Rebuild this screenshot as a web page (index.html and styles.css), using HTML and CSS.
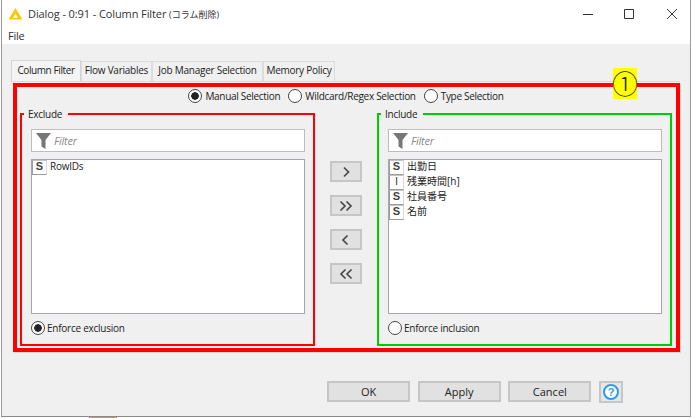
FILE: index.html
```html
<!DOCTYPE html>
<html lang="ja">
<head>
<meta charset="utf-8">
<title>Dialog - 0:91 - Column Filter</title>
<link rel="stylesheet" href="styles.css">
</head>
<body>
<div class="window">
  <header class="titlebar">
    <svg class="app-icon" width="15" height="13" viewBox="0 0 16 14"><path d="M8 1 15.5 13.5H.5Z" fill="#fbc800"/><path d="M8 7 10.6 11.5H5.4Z" fill="#fff"/></svg>
    <span class="title">Dialog - 0:91 - Column Filter <span class="cjk">(コラム削除)</span></span>
    <div class="controls">
      <svg width="12" height="12" viewBox="0 0 12 12"><path d="M1 6.5H11" stroke="#333" fill="none"/></svg>
      <svg width="12" height="12" viewBox="0 0 12 12"><path d="M1.5 1.5H10.5V10.5H1.5Z" stroke="#333" fill="none"/></svg>
      <svg class="close" width="12" height="12" viewBox="0 0 12 12"><path d="M1 1 11 11M11 1 1 11" stroke="#333" fill="none"/></svg>
    </div>
  </header>
  <div class="menubar">File</div>
  <main class="content">
    <nav class="tabs">
      <span class="tab active">Column Filter</span>
      <span class="tab t2">Flow Variables</span>
      <span class="tab t3">Job Manager Selection</span>
      <span class="tab t4">Memory Policy</span>
    </nav>
    <section class="pane">
      <div class="frame">
        <div class="mode">
          <label class="radio on">Manual Selection</label>
          <label class="radio">Wildcard/Regex Selection</label>
          <label class="radio">Type Selection</label>
        </div>
        <div class="columns">
          <fieldset class="group exclude">
            <legend>Exclude</legend>
            <div class="filter">
              <svg width="15" height="16" viewBox="0 0 15 16"><path d="M0 0H15L9.5 7V16L5.5 13.5V7Z" fill="#777"/></svg>
              <span>Filter</span>
            </div>
            <ul class="list">
              <li><b class="type">S</b><span class="latin">RowIDs</span></li>
            </ul>
            <label class="radio on enforce">Enforce exclusion</label>
          </fieldset>
          <div class="movers">
            <button class="mover"><svg width="12" height="12" viewBox="0 0 12 12"><path d="M4 1.5 8.5 6 4 10.5" /></svg></button>
            <button class="mover"><svg width="14" height="12" viewBox="0 0 14 12"><path d="M1.5 1.5 6 6 1.5 10.5M7.5 1.5 12 6 7.5 10.5" /></svg></button>
            <button class="mover"><svg width="12" height="12" viewBox="0 0 12 12"><path d="M7.5 1.5 3 6 7.5 10.5" /></svg></button>
            <button class="mover"><svg width="14" height="12" viewBox="0 0 14 12"><path d="M6.5 1.5 2 6 6.5 10.5M12.5 1.5 8 6 12.5 10.5" /></svg></button>
          </div>
          <fieldset class="group include">
            <legend>Include</legend>
            <div class="filter">
              <svg width="15" height="16" viewBox="0 0 15 16"><path d="M0 0H15L9.5 7V16L5.5 13.5V7Z" fill="#777"/></svg>
              <span>Filter</span>
            </div>
            <ul class="list">
              <li><b class="type">S</b>出勤日</li>
              <li><b class="type thin">I</b>残業時間[h]</li>
              <li><b class="type">S</b>社員番号</li>
              <li><b class="type">S</b>名前</li>
            </ul>
            <label class="radio enforce">Enforce inclusion</label>
          </fieldset>
        </div>
        <div class="badge">①</div>
      </div>
    </section>
    <footer class="actions">
      <button class="action">OK</button>
      <button class="action">Apply</button>
      <button class="action">Cancel</button>
      <button class="help"><svg width="18" height="18" viewBox="0 0 18 18"><circle cx="9" cy="9" r="7" fill="#fff" stroke="#2f9be8" stroke-width="2"/><text x="9" y="13" text-anchor="middle" class="help-q">?</text></svg></button>
    </footer>
  </main>
</div>
<div class="strip"></div>
</body>
</html>
```
FILE: styles.css
```css
* { box-sizing: border-box; }
html, body { margin: 0; padding: 0; }
body {
  width: 695px;
  height: 418px;
  overflow: hidden;
  background: #fff;
  font-family: "Open Sans", "Noto Sans CJK JP", sans-serif;
  font-size: 10px;
  letter-spacing: -0.25px;
  color: #222;
}
.window {
  width: 690px;
  height: 417px;
  margin-left: 1px;
  border-left: 1px solid #9a9a9a;
  border-right: 1px solid #9a9a9a;
  border-bottom: 1px solid #8a8a8a;
  display: flex;
  flex-direction: column;
  background: #fff;
}
.strip {
  width: 28px;
  height: 1px;
  margin-left: 89px;
  background: #c8a51e;
}
.titlebar {
  height: 27px;
  display: flex;
  align-items: center;
  padding-left: 6px;
  flex: none;
}
.app-icon { flex: none; }
.title {
  margin-left: 5px;
  font-size: 11px;
  letter-spacing: -0.1px;
  color: #333;
}
.cjk {
  font-size: 9px;
  letter-spacing: 0;
}
.controls {
  margin-left: auto;
  display: flex;
  gap: 29px;
  padding-right: 12px;
}
.close { margin-left: 2px; }
.menubar {
  height: 17px;
  line-height: 18px;
  padding-left: 6px;
  font-size: 11px;
  color: #333;
  flex: none;
}
.content {
  flex: 1;
  background: #f0f0f0;
  padding: 15px 10px 0 9px;
  display: flex;
  flex-direction: column;
}
.tabs {
  display: flex;
  height: 22px;
  align-items: flex-end;
  flex: none;
}
.tab {
  height: 20px;
  line-height: 17px;
  width: 71px;
  text-align: center;
  border: 1px solid #dcdcdc;
  border-bottom: none;
  color: #222;
  white-space: nowrap;
}
.tab.active {
  height: 22px;
  width: 70px;
  line-height: 18px;
  margin-bottom: -1px;
  background: #f4f4f4;
  border-color: #d4d4d4;
  letter-spacing: -0.4px;
}
.t3 { width: 111px; }
.t4 { width: 72px; }
.pane {
  margin-left: 2px;
  width: 667px;
  height: 272px;
  padding-top: 1px;
  border-top: 1px solid #d9d9d9;
  flex: none;
}
.frame {
  position: relative;
  height: 269px;
  border: 4px solid #f00;
  padding: 1px 4px 2px 3px;
  display: flex;
  flex-direction: column;
  box-shadow: 1px 1px 1px #d8d8d8;
}
.mode {
  height: 16px;
  margin-bottom: 2px;
  display: flex;
  justify-content: center;
  gap: 8px;
  letter-spacing: -0.3px;
  flex: none;
}
.radio {
  display: flex;
  align-items: center;
  gap: 3px;
  color: #222;
  font-size: 10px;
  white-space: nowrap;
}
.radio::before {
  content: "";
  width: 12px;
  height: 12px;
  border-radius: 50%;
  border: 1px solid #444;
  background: #fff;
  flex: none;
}
.radio.on::before {
  background: radial-gradient(circle, #222 0 3.5px, #fff 4px);
}
.columns {
  flex: 1;
  display: flex;
  min-height: 0;
}
.group {
  margin: 0;
  min-width: 0;
  width: 295px;
  padding: 0 8px 2px 9px;
  border: 2px solid;
  display: flex;
  flex-direction: column;
}
.exclude { border-color: #f00; }
.include { border-color: #0c0; }
legend {
  height: 16px;
  line-height: 16px;
  margin-left: -7px;
  padding: 0 6px 0 4px;
  font-size: 10px;
  color: #222;
}
.filter {
  height: 23px;
  margin-top: 7px;
  display: flex;
  align-items: center;
  gap: 3px;
  padding-left: 4px;
  background: #fff;
  border: 1px solid #bdbdbd;
  font-style: italic;
  font-size: 11px;
  color: #8c8c8c;
  flex: none;
}
.list {
  flex: 1;
  list-style: none;
  margin: 7px 0 0;
  padding: 0;
  background: #fff;
  border: 1px solid #a5a5ad;
  min-height: 0;
}
.list li {
  height: 15px;
  display: flex;
  align-items: flex-start;
  gap: 3px;
  font-size: 10px;
  line-height: 13px;
  letter-spacing: 0;
  color: #222;
}
.latin { letter-spacing: -0.25px; }
.type {
  width: 15px;
  height: 15px;
  flex: none;
  border: 1px solid #9c9c9c;
  border-top-color: #c4c4c4;
  border-right-color: #d8d8d8;
  font: bold 11px/11px "Liberation Sans", sans-serif;
  text-align: center;
  color: #444;
}
.type.thin { font-weight: normal; }
.enforce {
  height: 16px;
  margin: 6px 0 6px;
  gap: 2px;
}
.movers {
  width: 62px;
  flex: none;
  display: flex;
  flex-direction: column;
  align-items: center;
  gap: 13px;
  padding-top: 55px;
}
.mover {
  width: 32px;
  height: 21px;
  padding: 0;
  background: #e1e1e1;
  border: 2px solid #c6c6c6;
  display: flex;
  align-items: center;
  justify-content: center;
}
.mover path {
  fill: none;
  stroke: #444;
  stroke-width: 1.6;
}
.badge {
  position: absolute;
  left: 596px;
  top: -19px;
  width: 24px;
  height: 31px;
  background: #ff0;
  font: 300 26px/29px "Noto Sans CJK JP", sans-serif;
  letter-spacing: 0;
  display: flex;
  justify-content: center;
  color: #222;
}
.actions {
  display: flex;
  justify-content: flex-end;
  gap: 7.67px;
  margin-top: 28px;
  padding-right: 57px;
  align-items: flex-start;
}
.action {
  width: 83px;
  height: 21px;
  padding: 0;
  background: #e1e1e1;
  border: 2px solid #c6c6c6;
  font: 11px "Open Sans", sans-serif;
  color: #222;
}
.help {
  width: 24px;
  height: 22px;
  padding: 0;
  background: #e6e6e6;
  border: 2px solid #c6c6c6;
  display: flex;
  align-items: center;
  justify-content: center;
}
.help-q {
  font: bold 11px "Liberation Sans", sans-serif;
  fill: #2f9be8;
}
```
